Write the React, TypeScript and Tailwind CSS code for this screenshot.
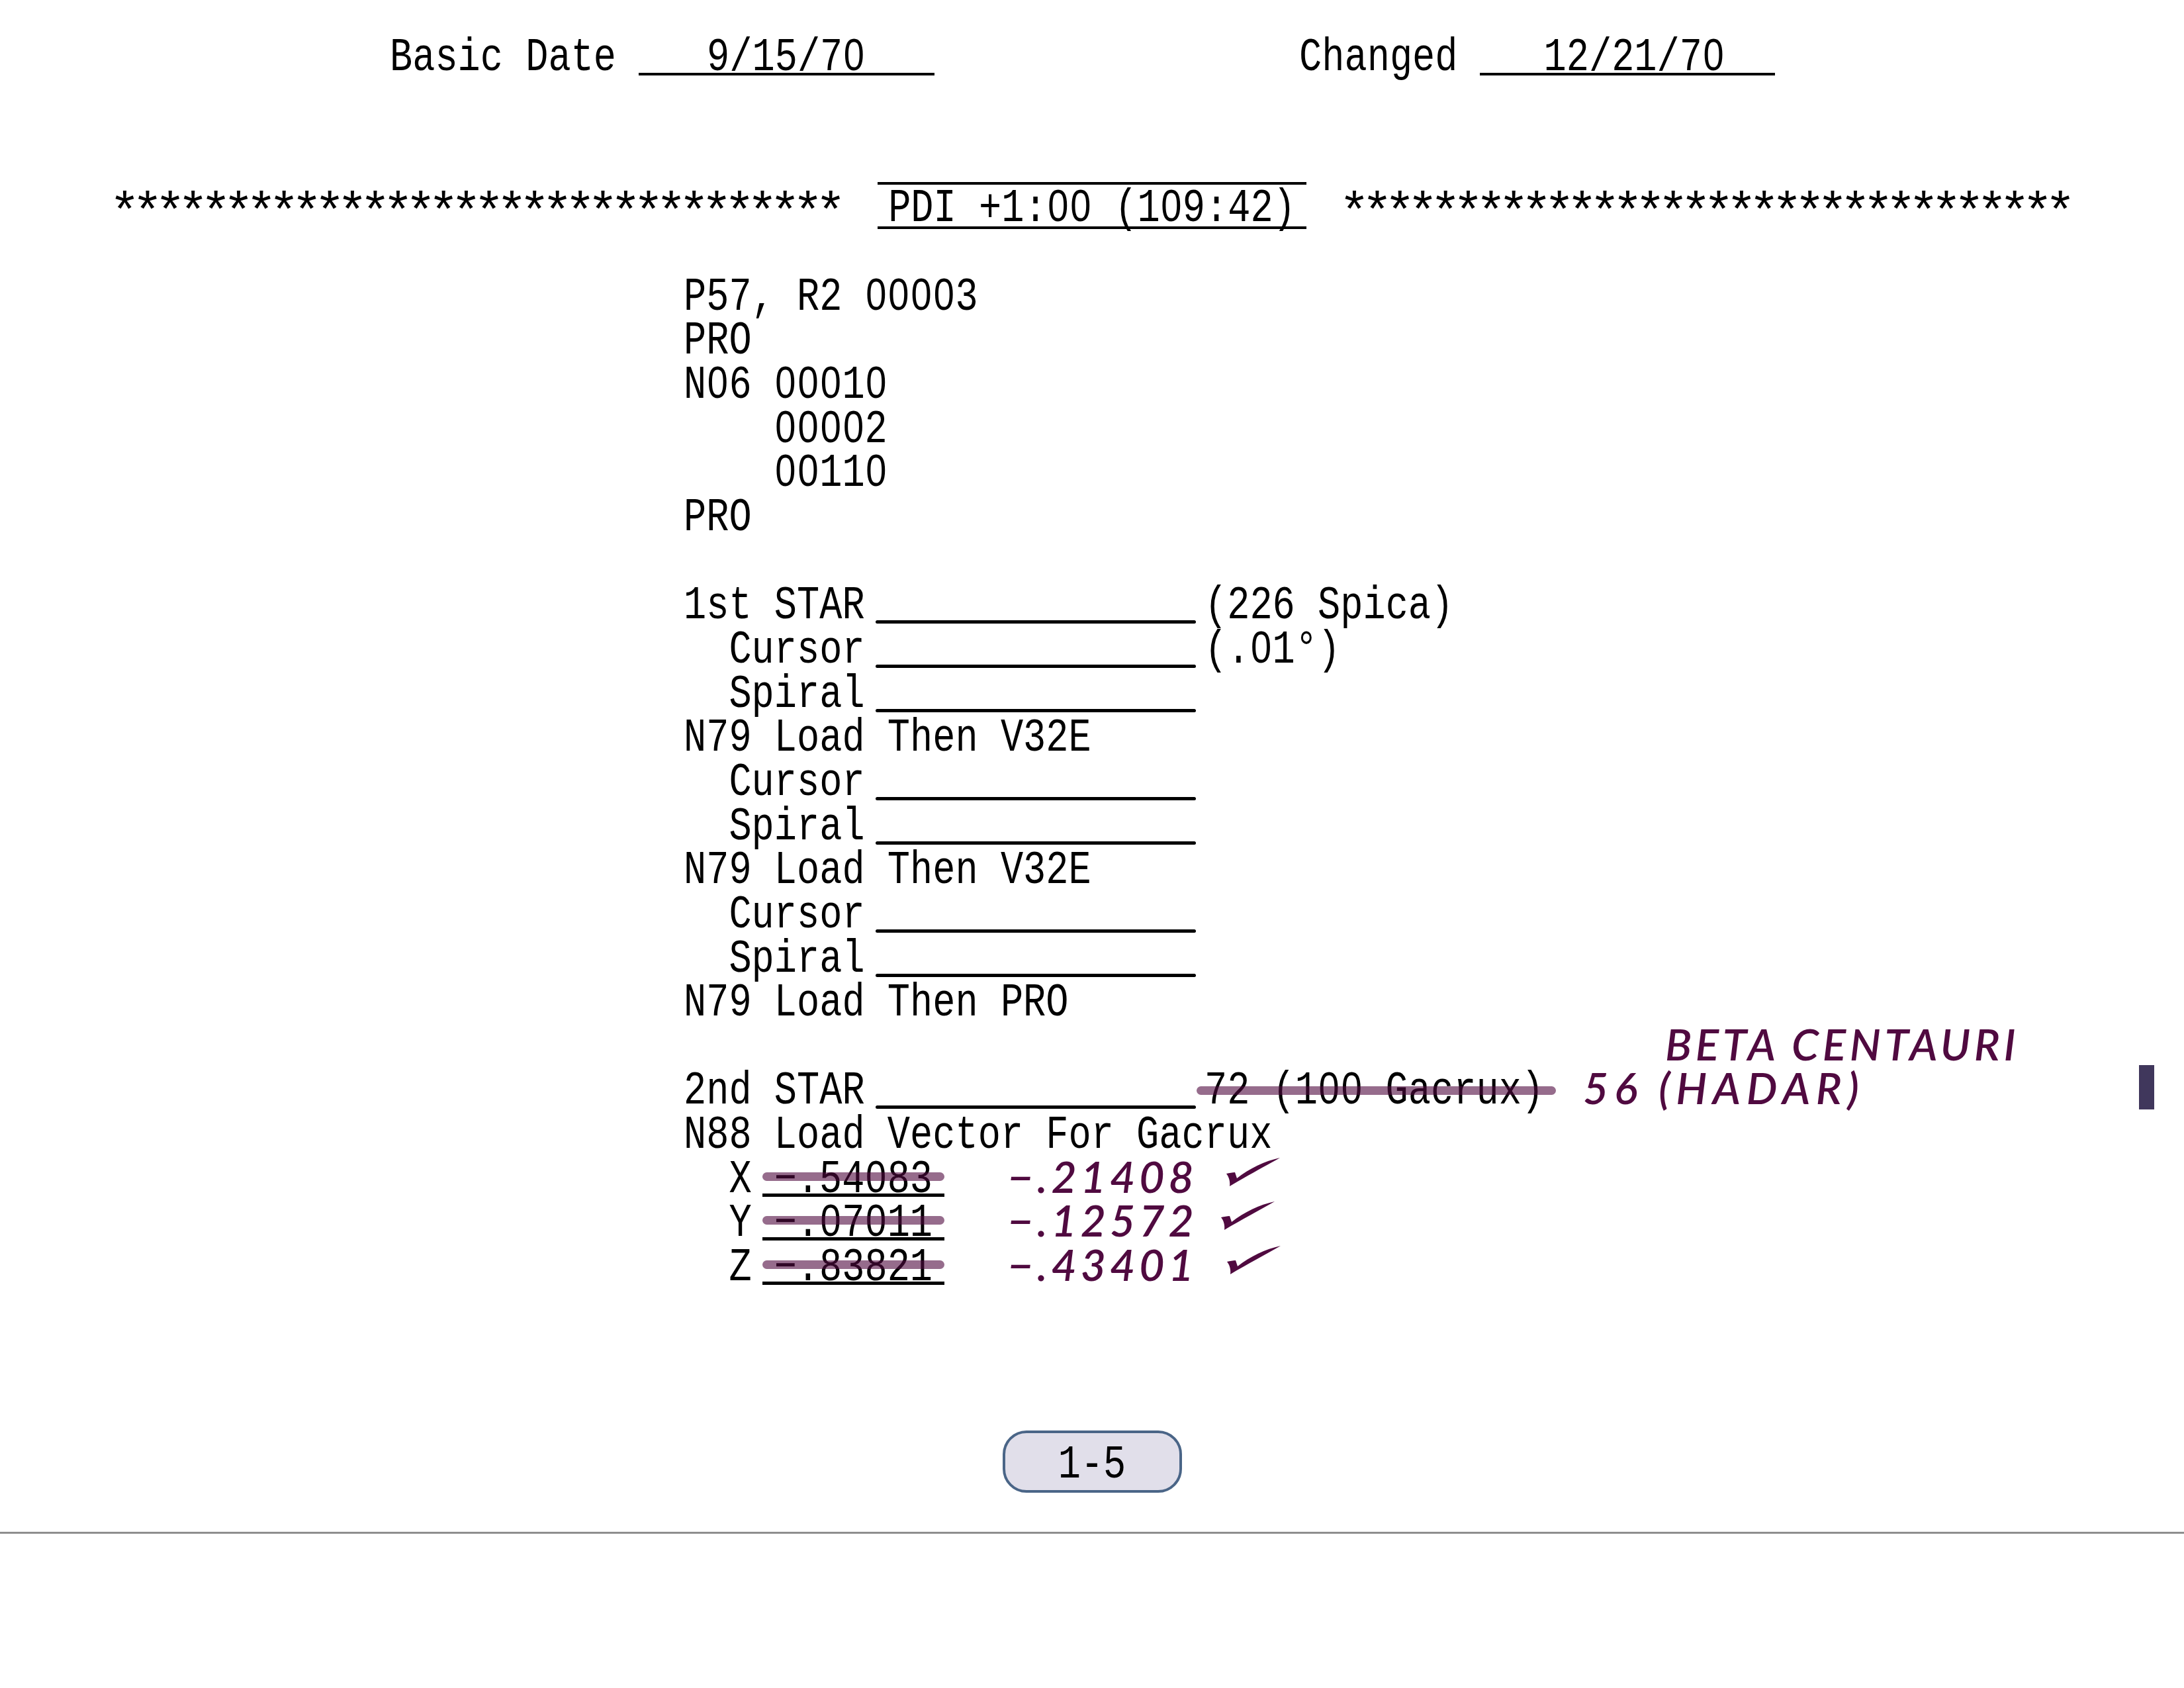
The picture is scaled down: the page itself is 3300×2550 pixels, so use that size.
// page 1-5 of the checklist, typed text plus handwritten corrections
function Mono({ t }: { t: string }) {
  // the typed face has a plain zero, Liberation Mono's is dotted
  return (
    <span className="inline-block whitespace-pre scale-y-[1.22] translate-y-[2px]">
      {t.split(/(0)/).map((part, i) =>
        part === '0' ? (
          <span key={i} className="inline-block w-[34.2px] text-center font-['Liberation_Sans'] text-[56px] leading-[40px]">0</span>
        ) : (
          <span key={i}>{part}</span>
        ),
      )}
    </span>
  )
}

function Stars() {
  return (
    <span className="inline-block w-[1107px] whitespace-pre text-[78px] tracking-[-12.4px] translate-y-[16px]">
      ********************************
    </span>
  )
}

function Hand({ children, className }: { children: string; className: string }) {
  return (
    <span className={`inline-block font-['Lato'] italic font-semibold whitespace-pre text-[#500a40] text-[66px] -translate-y-[4px] ${className}`}>{children}</span>
  )
}

function Check({ className }: { className: string }) {
  return (
    <svg viewBox="0 0 81 44" className={`w-[81px] h-[44px] shrink-0 ${className}`}>
      <path d="M0 24 C5 23 9 22 13 22 C14 25 15 28 16 31 C35 16 58 5 81 0 C60 12 30 28 5 43 C6 36 4 29 0 24 Z" fill="#500a40" />
    </svg>
  )
}

function Line({ t }: { t: string }) {
  return (
    <div className="h-[66.67px]">
      <Mono t={t} />
    </div>
  )
}

function Fill({ label, note }: { label: string; note?: string }) {
  return (
    <div className="flex h-[66.67px]">
      <div className="w-[290px]">
        <Mono t={label} />
      </div>
      <div className="w-[484px] h-[5px] mt-[56px] rounded-full bg-black" />
      {note && (
        <div className="ml-[13px]">
          <Mono t={note} />
        </div>
      )}
    </div>
  )
}

const vectors = [
  { axis: '  X', old: '−.54083', fix: '−.21408', checkClass: 'ml-[43px] mt-[1px]' },
  { axis: '  Y', old: '−.07011', fix: '−.12572', checkClass: 'ml-[35px] mt-[1px]' },
  { axis: '  Z', old: '−.83821', fix: '−.43401', checkClass: 'ml-[44px] mt-[1px]' },
]

export default function App() {
  return (
    <div className="w-[3300px] h-[2550px] bg-white text-black overflow-hidden flex flex-col font-['Liberation_Mono'] text-[57px] leading-[66.67px]">
      <div className="flex h-[66.67px] mt-[53px] pl-[589px]">
        <Mono t="Basic Date" />
        <div className="ml-[34px] w-[447px] h-[61px] pl-[103px] border-b-4 border-black">
          <Mono t="9/15/70" />
        </div>
        <div className="ml-[551px]">
          <Mono t="Changed" />
        </div>
        <div className="ml-[33px] w-[446px] h-[61px] pl-[97px] border-b-4 border-black">
          <Mono t="12/21/70" />
        </div>
      </div>

      <div className="flex items-start mt-[155px] pl-[165px]">
        <Stars />
        <div className="ml-[54px] mr-[49px] w-[648px] h-[71px] pt-[2px] text-center border-y-4 border-black">
          <Mono t="PDI +1:00 (109:42)" />
        </div>
        <Stars />
      </div>

      <div className="mt-[69px] pl-[1033px]">
        <Line t="P57, R2 00003" />
        <Line t="PRO" />
        <Line t="N06 00010" />
        <Line t="    00002" />
        <Line t="    00110" />
        <Line t="PRO" />
        <Line t=" " />
        <Fill label="1st STAR" note="(226 Spica)" />
        <Fill label="  Cursor" note="(.01°)" />
        <Fill label="  Spiral" />
        <Line t="N79 Load Then V32E" />
        <Fill label="  Cursor" />
        <Fill label="  Spiral" />
        <Line t="N79 Load Then V32E" />
        <Fill label="  Cursor" />
        <Fill label="  Spiral" />
        <Line t="N79 Load Then PRO" />

        <div className="h-[66.67px] pl-[1483px]">
          <Hand className="tracking-[5.6px]">BETA CENTAURI</Hand>
        </div>

        <div className="flex h-[66.67px] pr-[45px]">
          <div className="w-[290px]">
            <Mono t="2nd STAR" />
          </div>
          <div className="w-[484px] h-[5px] mt-[56px] rounded-full bg-black" />
          <div className="relative ml-[13px] w-[572px]">
            <Mono t="72 (100 Gacrux)" />
            <div className="absolute left-[-12px] top-[27px] w-[543px] h-[13px] rounded-full bg-[#500a40]/60" />
          </div>
          <Hand className="tracking-[8.6px]">56 (HADAR)</Hand>
          <div className="ml-auto -mt-[5px] w-[23px] h-[67px] bg-[#40375c]" />
        </div>

        <Line t="N88 Load Vector For Gacrux" />

        {vectors.map((v) => (
          <div key={v.axis} className="flex h-[66.67px]">
            <Mono t={v.axis} />
            <div className="relative ml-[16px] w-[275px] h-[60px] pl-[18px] border-b-[5px] border-black">
              <Mono t={v.old} />
              <div className="absolute left-0 top-[23px] w-full h-[13px] rounded-full bg-[#500a40]/60" />
            </div>
            <div className="ml-[96px] w-[287px]">
              <Hand className="tracking-[6px]">{v.fix}</Hand>
            </div>
            <Check className={v.checkClass} />
          </div>
        ))}
      </div>

      <div className="mt-[213px] self-center flex justify-center w-[271px] h-[94px] pt-[14px] rounded-[36px] border-4 border-[#4a6587] bg-[#e1dfea]">
        <Mono t="1-5" />
      </div>

      <div className="mt-[59px] h-[3px] w-full bg-[#8e8e8e]" />
    </div>
  )
}
